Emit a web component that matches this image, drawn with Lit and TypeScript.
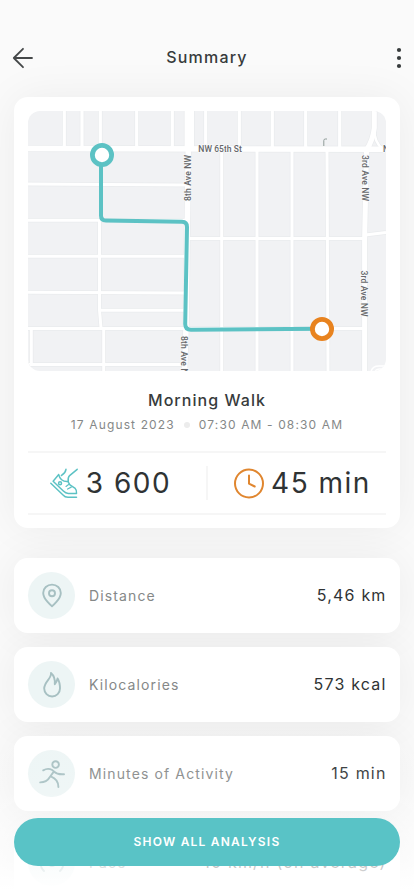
import { LitElement, html, css, svg } from "lit";
import { customElement, property } from "lit/decorators.js";

@customElement("route-map")
class RouteMap extends LitElement {
  static styles = css`
    :host { display: block; height: 260px; border-radius: 12px; overflow: hidden; background: #f1f2f4; }
    svg { display: block; width: 100%; height: 100%; }
    .edge { fill: none; stroke: #e9ebed; }
    .road { fill: none; stroke: #fff; }
    .name { font: 500 8.6px Roboto, sans-serif; fill: #66686b; stroke: #f8f9fa; stroke-width: 1.6px; paint-order: stroke; }
    .route { fill: none; stroke: #5cc2c4; stroke-width: 4; stroke-linejoin: round; }
  `;

  render() {
    const streets: [string, number][] = [
      ["M64.3 111V149M82 111V149M100.3 111V149M136.7 111V149M172.3 111V149M205.7 111V149M239.3 111V149M272.3 111V149M305.7 111V149M339.7 111V149", 3.2],
      ["M28 184L186 185M28 220.3H186M28 256.3H185M28 292.3L185 293M101 310.3H184M28 328.5H186M28 364.5H184", 3],
      ["M99.5 220V310L101 328M103.7 328V371M31.3 328V364", 3],
      ["M221.7 150V371M257 150V371M292 150V371M327 150L328 371", 3],
      ["M188 238.5H365M188 328.5H365M365 235L386 232.5", 3],
      ["M28 148.6L386 149.2", 5.5],
      ["M374.3 111V128Q373 140 366 151", 5],
      ["M374.3 128Q374 143 383 149", 2.5],
      ["M366.5 150L364.6 240V371", 5],
      ["M189.3 111V150", 9.4],
      ["M188.3 148L186 328L184.5 371", 5.5],
    ];
    return html`<svg viewBox="28 111 358 260" aria-label="Walking route">
      ${streets.map(([d, w]) => svg`<path class="edge" d=${d} stroke-width=${w + 1.4} />`)}
      ${streets.map(([d, w]) => svg`<path class="road" d=${d} stroke-width=${w} />`)}
      <path class="road" d="M371 372Q372 366 379 366H386M375 372Q376 369 380 369H386" stroke-width="1.5" />
      <path d="M323.8 146V140.5Q323.8 139 325.3 139H327" fill="none" stroke="#8f9c98" stroke-width="1" />
      <text class="name" x="198.3" y="152" textLength="43.5">NW 65th St</text>
      <text class="name" x="383" y="152">N</text>
      <text class="name" transform="translate(191.3 201) rotate(-90)" textLength="46">8th Ave NW</text>
      <text class="name" transform="translate(181.2 336) rotate(90)" textLength="46">8th Ave NW</text>
      <text class="name" transform="translate(362.4 155) rotate(90)" textLength="46">3rd Ave NW</text>
      <text class="name" transform="translate(361.2 270.5) rotate(90)" textLength="46">3rd Ave NW</text>
      <path class="route" d="M101 155V215.5Q101 220.5 106 220.6L182 221.8Q187 222 187 227L185.2 324Q185.2 329.8 191 329.8L322 328.8" />
      <circle cx="102" cy="155" r="9.6" fill="#fff" stroke="#5cc2c4" stroke-width="4.8" />
      <circle cx="322" cy="329" r="9.6" fill="#fff" stroke="#e8831f" stroke-width="4.8" />
    </svg>`;
  }
}

const icons = {
  pin: svg`<path d="M12 22.2C12 22.2 3.2 15.2 3.2 8.9A8.8 8.3 0 0 1 20.8 8.9C20.8 15.2 12 22.2 12 22.2Z"/><circle cx="12" cy="9.2" r="3"/>`,
  fire: svg`<path d="M11 0C11.8 5.6 4.2 8.4 4.2 15.6A7.9 7.9 0 0 0 20 15.6C20 12 19 7.6 17.6 5.4C17 7.8 16.2 9.4 14.8 11.2C15.2 6.8 14.2 2.8 11 0Z"/>`,
  run: svg`<circle cx="15.6" cy="2.6" r="3.3"/><path d="M3.2 8.3C6.2 6.6 9 6.2 12.2 8C15 9.8 14.8 12.8 24 12.2M13.8 9.6L9.3 15.8C7.6 19 5 20.4 .2 20.4M10.8 14.4C15.4 16.2 18.4 19.4 18.4 25"/>`,
  pace: svg`<circle cx="12" cy="12" r="3"/><path d="M4 20A11 11 0 0 1 4 4M20 20A11 11 0 0 0 20 4"/>`,
};

@customElement("metric-card")
class MetricCard extends LitElement {
  static styles = css`
    :host { display: flex; align-items: center; box-sizing: border-box; height: 75px; padding: 0 14px; border-radius: 14px; background: #fff; font-family: Inter, sans-serif; }
    .badge { display: grid; place-items: center; width: 47px; height: 47px; border-radius: 50%; background: #edf5f5; }
    svg { width: 24px; height: 24px; overflow: visible; fill: none; stroke: #a7c0c2; stroke-width: 1.9; stroke-linecap: round; stroke-linejoin: round; }
    .label { flex: 1; margin-left: 14px; font-size: 14px; letter-spacing: 1.12px; color: #858888; white-space: nowrap; }
    .value { margin-top: -2px; font-size: 16px; font-weight: 400; letter-spacing: 1.2px; margin-right: -.6px; color: #2f3334; white-space: nowrap; }
  `;
  @property() icon: keyof typeof icons = "pin";
  @property() label = "";
  @property() value = "";
  render() {
    return html`<span class="badge"><svg viewBox="0 0 24 24">${icons[this.icon]}</svg></span>
      <span class="label">${this.label}</span><span class="value">${this.value}</span>`;
  }
}

@customElement("app-root")
class AppRoot extends LitElement {
  static styles = css`
    :host { display: block; position: relative; box-sizing: border-box; height: 896px; overflow: hidden; background: #fafafa; font-family: Inter, sans-serif; color: #373b3c; }
    .header { display: flex; align-items: center; justify-content: space-between; height: 38px; padding: 39px 12px 20px; }
    .header svg { width: 22px; height: 22px; overflow: visible; }
    .header svg.more { width: 6px; }
    .header h1 { margin: -2px 16px 0 0; font-size: 16px; font-weight: 550; letter-spacing: 1.2px; }
    .body { position: relative; z-index: 0; display: flex; flex-direction: column; gap: 30px; padding: 0 14px; }
    .summary { box-sizing: border-box; height: 431px; padding: 14px; border-radius: 14px; background: #fff; box-shadow: 0 0 44px rgba(0, 0, 0, .06); }
    .title { margin: 18px 0 0; font-size: 16px; line-height: 22px; font-weight: 450; letter-spacing: 1.05px; text-align: center; }
    .when { display: flex; align-items: center; justify-content: center; gap: 9px; margin-top: 4px; font-size: 12px; line-height: 20px; letter-spacing: 1.13px; color: #858888; white-space: nowrap; }
    .dot { width: 6px; height: 6px; border-radius: 50%; background: #ececec; }
    .stats { display: grid; grid-template-columns: 1fr 1fr; align-items: center; height: 60px; margin-top: 16px; border-top: 2px solid #f6f6f6; border-bottom: 2px solid #f6f6f6; }
    .stat { box-sizing: border-box; display: flex; align-items: center; justify-content: center; gap: 7px; height: 34px; padding-right: 15px; font-size: 28px; font-weight: 400; letter-spacing: 1.5px; white-space: nowrap; color: #2f3334; }
    .stat + .stat { margin-left: -1px; border-left: 2px solid #f6f6f6; padding: 0 0 0 11px; }
    .stat svg { width: 30px; height: 31px; margin-top: 1px; }
    .metrics { display: flex; flex-direction: column; gap: 14px; }
    .metrics metric-card { position: relative; }
    .metrics metric-card::before { content: ""; position: absolute; inset: 0; z-index: -1; border-radius: 14px; box-shadow: 0 0 44px rgba(0, 0, 0, .06); }
    .fade { position: absolute; z-index: 1; inset: 700px 0 0; background: linear-gradient(rgba(255,255,255,0), rgba(255,255,255,.1) 45%, rgba(255,255,255,.65) 82%, #fff 97%); }
    .cta { position: absolute; z-index: 2; left: 14px; right: 14px; top: 818px; height: 48px; padding: 0 0 2px; border: 0; border-radius: 24px; background: #59c3c6; color: #fff; font: 600 12px Inter, sans-serif; letter-spacing: 1.2px; }
  `;
  render() {
    return html`
      <header class="header">
        <svg viewBox="0 0 22 22" fill="none" stroke="#454849" stroke-width="1.8" stroke-linecap="round" stroke-linejoin="round"><path d="M20 11H1.8M11 1.8L1.8 11L11 20.2"/></svg>
        <h1>Summary</h1>
        <svg class="more" viewBox="0 0 6 22" fill="#373b3c"><circle cx="3" cy="3" r="2.1"/><circle cx="3" cy="11" r="2.1"/><circle cx="3" cy="19" r="2.1"/></svg>
      </header>
      <main class="body">
        <section class="summary">
          <route-map></route-map>
          <h2 class="title">Morning Walk</h2>
          <div class="when"><span>17 August 2023</span><i class="dot"></i><span>07:30 AM - 08:30 AM</span></div>
          <div class="stats">
            <div class="stat">
              <svg viewBox="105 261 90 94" fill="none" stroke="#5cc2c4" stroke-width="4.5" stroke-linecap="round" stroke-linejoin="round">
                <path d="M156 265C155 275 149 279 142 284M190 265L167 284Q161 290 163 302M134 281C137 294 147 303 162 302L168 312L184 323Q189 328 188 338H163Q155 338 148 331L117 301L134 281M110 307L147 343Q153 350 162 350H188"/><path stroke-width="3.5" d="M156 317L164 311M161 325L172 319"/><circle cx="138" cy="307" r="4.5"/>
              </svg><span>3 600</span>
            </div>
            <div class="stat">
              <svg viewBox="0 0 30 30" fill="none" stroke="#e0862f" stroke-width="2" stroke-linecap="round" stroke-linejoin="round"><circle cx="15" cy="15" r="14"/><path d="M15 7V15.2L20.7 18"/></svg><span>45 min</span>
            </div>
          </div>
        </section>
        <section class="metrics">
          <metric-card icon="pin" label="Distance" value="5,46 km"></metric-card>
          <metric-card icon="fire" label="Kilocalories" value="573 kcal"></metric-card>
          <metric-card icon="run" label="Minutes of Activity" value="15 min"></metric-card>
          <metric-card icon="pace" label="Pace" value="10 km/h (on average)"></metric-card>
        </section>
      </main>
      <div class="fade"></div>
      <button class="cta">SHOW ALL ANALYSIS</button>`;
  }
}
